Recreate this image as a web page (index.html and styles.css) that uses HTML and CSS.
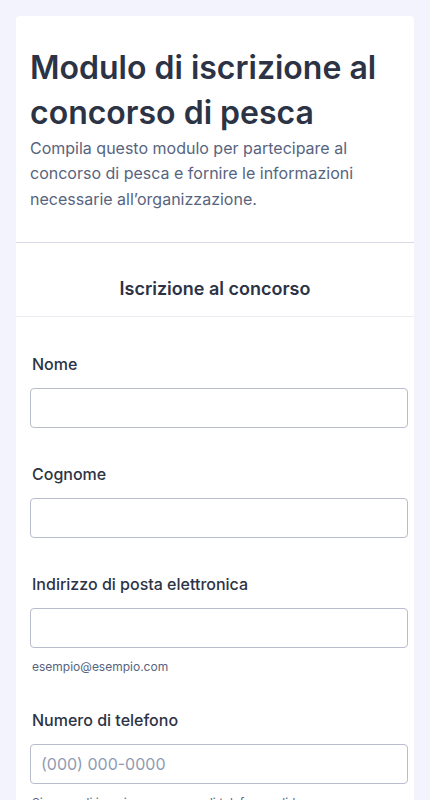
FILE: index.html
```html
<!DOCTYPE html>
<html lang="it">
<head>
    <meta charset="UTF-8">
    <title>Modulo di iscrizione al concorso di pesca</title>
    <link rel="stylesheet" href="styles.css">
</head>
<body>
    <form class="form-card">
        <header class="form-header">
            <h1>Modulo di iscrizione al concorso di pesca</h1>
            <p>Compila questo modulo per partecipare al concorso di pesca e fornire le informazioni necessarie all’organizzazione.</p>
        </header>

        <h2 class="section-title">Iscrizione al concorso</h2>

        <section class="fields">
            <div class="field">
                <label for="nome">Nome</label>
                <input type="text" id="nome">
            </div>
            <div class="field">
                <label for="cognome">Cognome</label>
                <input type="text" id="cognome">
            </div>
            <div class="field">
                <label for="email">Indirizzo di posta elettronica</label>
                <input type="email" id="email">
                <span class="sublabel">esempio@esempio.com</span>
            </div>
            <div class="field">
                <label for="telefono">Numero di telefono</label>
                <input type="tel" id="telefono" placeholder="(000) 000-0000">
                <span class="sublabel">Si prega di inserire un numero di telefono valido.</span>
            </div>
        </section>
    </form>
</body>
</html>
```

FILE: styles.css
```css
body {
    margin: 0;
    padding: 16px 16px 40px;
    background-color: #f3f3fe;
    font-family: Inter, "Noto Sans", sans-serif;
    color: #2c3345;
}

.form-card {
    background-color: #fff;
    border-radius: 4px;
}

.form-header {
    padding: 30px 16px 30px 14px;
    border-bottom: 1px solid #d9dae6;
}

.form-header h1 {
    margin: 0;
    font-size: 32px;
    font-weight: 600;
    line-height: 1.4;
}

.form-header p {
    margin: 0;
    font-size: 16px;
    line-height: 1.6;
    color: #57647e;
}

.section-title {
    margin: 0;
    padding: 34px 0 15px;
    text-align: center;
    font-size: 18px;
    font-weight: 600;
    line-height: 24px;
    border-bottom: 1px solid #ebecf2;
}

.fields {
    padding: 37px 6px 20px 14px;
}

.field {
    display: flex;
    flex-direction: column;
    margin-bottom: 36px;
}

.field label {
    padding-left: 2px;
    font-size: 16px;
    font-weight: 500;
    line-height: 20px;
    margin-bottom: 14px;
}

.field input {
    box-sizing: border-box;
    height: 40px;
    padding: 0 10px;
    border: 1px solid #b9bccc;
    border-radius: 4px;
    font-family: inherit;
    font-size: 16px;
    color: #2c3345;
}

.field input::placeholder {
    color: #8f9bb3;
}

.sublabel {
    padding-left: 2px;
    margin-top: 11px;
    margin-bottom: -1px;
    font-size: 12px;
    line-height: 16px;
    color: #57647e;
}
```
